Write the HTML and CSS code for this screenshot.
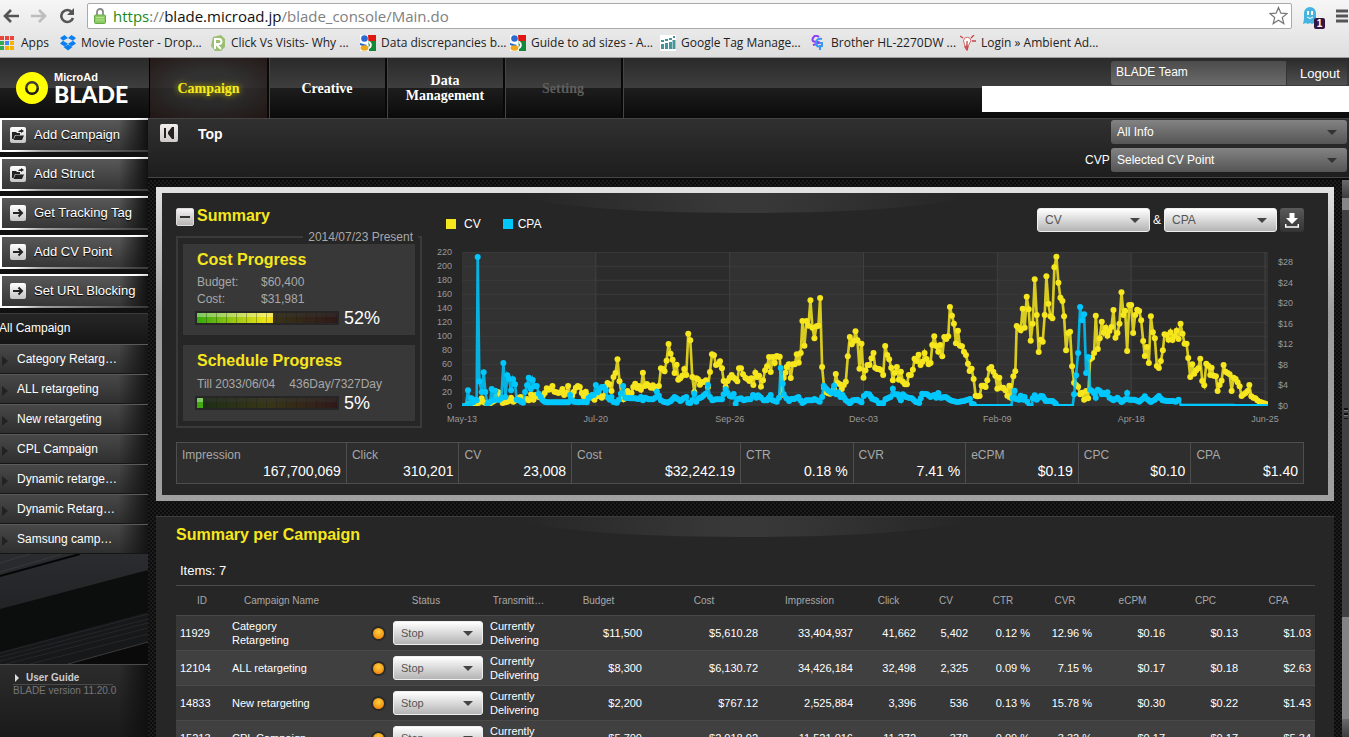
FILE: index.html
```html
<!DOCTYPE html>
<html lang="en">
<head>
<meta charset="utf-8">
<title>MicroAd BLADE</title>
<link rel="stylesheet" href="styles.css">
</head>
<body>
<div class="chrome">
  <div class="toolbar">
    <button class="tool" aria-label="Back"><svg width="16" height="14" viewBox="0 0 16 14"><path d="M8 1 2 7l6 6M2 7h14" fill="none" stroke="#555" stroke-width="2.6"/></svg></button>
    <button class="tool" aria-label="Forward"><svg width="16" height="14" viewBox="0 0 16 14"><path d="M8 1l6 6-6 6M14 7H0" fill="none" stroke="#bdbdbd" stroke-width="2.6"/></svg></button>
    <button class="tool" aria-label="Reload"><svg width="16" height="16" viewBox="0 0 16 16"><path d="M13 4.2A6 6 0 1 0 14 10" fill="none" stroke="#555" stroke-width="2.6"/><path d="M15 0v7H8z" fill="#555"/></svg></button>
    <div class="address">
      <svg width="12" height="16" viewBox="0 0 12 16"><path d="M3 8V4a3 3 0 0 1 6 0v4" fill="none" stroke="#8a8a8a" stroke-width="1.8"/><rect x=".5" y="7" width="11" height="8.500" rx="1" fill="#8ccb5e" stroke="#6aa84c"/><path d="M2 9.500h8M2 12h8" stroke="#b6e096"/></svg>
      <span class="url"><span class="secure">https</span>://<b>blade.microad.jp</b>/blade_console/Main.do</span>
      <svg class="star" width="19" height="19" viewBox="0 0 20 20"><path d="M10 1.500l2.500 6 6.500.5-5 4.200 1.600 6.300L10 15l-5.600 3.500L6 12.200 1 8l6.500-.5z" fill="#fff" stroke="#777" stroke-width="1.300"/></svg>
    </div>
    <div class="ghost">
      <svg width="22" height="24" viewBox="0 0 22 24"><path d="M1 20l1-5V9a6 6 0 0 1 12 0v6l1 5-3-1-2 1-2-1-2 1-2-1z" fill="#45b4e0"/><path d="M6 7v4M10 7v4" stroke="#fff" stroke-width="2"/><path d="M5 13q3 3 6 0" fill="none" stroke="#fff"/></svg>
      <span class="count">1</span>
    </div>
    <button class="tool menu" aria-label="Menu"><svg width="12" height="14" viewBox="0 0 12 14"><path d="M0 2h12M0 7h12M0 12h12" stroke="#555" stroke-width="3"/></svg></button>
  </div>
  <nav class="bookmarks">
    <a class="apps" href="#"><svg width="14" height="14" viewBox="0 0 14 14"><path d="M0 0h4v4H0zM5 0h4v4H5z" fill="#e8453c"/><path d="M10 0h4v4h-4z" fill="#e8453c"/><path d="M5 5h4v4H5z" fill="#4285f4"/><path d="M10 5h4v4h-4zM5 10h4v4H5zM10 10h4v4h-4z" fill="#f4b400"/><path d="M0 5h4v4H0zM0 10h4v4H0z" fill="#34a853"/></svg><span>Apps</span></a>
    <a href="#"><svg width="16" height="16" viewBox="0 0 16 16"><path d="M4.500 0 0 3l3 2.800L0 8.600l4.500 3L8 8.700l3.500 2.900 4.500-3-3-2.800L16 3l-4.500-3L8 3zM8 3l5 2.800L8 8.700 3 5.800z" fill="#0a7ff0" fill-rule="evenodd"/><path d="M3.500 12 8 9.500l4.500 2.500L8 15.500z" fill="#0a7ff0"/></svg><span>Movie Poster - Drop...</span></a>
    <a href="#"><svg width="16" height="16" viewBox="0 0 16 16"><path d="M3 2l8-2 4 4v8l-4 4H5l-4-5z" fill="#9bbf72"/><path d="M5 14V4h4a2.500 2.500 0 0 1 0 5H6l5 5" fill="none" stroke="#fff" stroke-width="2"/></svg><span>Click Vs Visits- Why ...</span></a>
    <a href="#"><svg width="16" height="16" viewBox="0 0 16 16"><path d="M7 0h9v6H7z" fill="#e3150f"/><path d="M7 6h9v10H7z" fill="#12893d"/><path d="M0 0h8l1 16H0z" fill="#fff"/><circle cx="4.500" cy="3.500" r="3.300" fill="#2b6bd1"/><path d="M0 8l7 2-2 2-5-2z" fill="#2b6bd1"/><ellipse cx="4.500" cy="13" rx="4" ry="2.800" fill="#f0a91c"/><path d="M8 6c5 0 5 8 0 8l2-4z" fill="#fff"/></svg><span>Data discrepancies b...</span></a>
    <a href="#"><svg width="16" height="16" viewBox="0 0 16 16"><path d="M7 0h9v6H7z" fill="#e3150f"/><path d="M7 6h9v10H7z" fill="#12893d"/><path d="M0 0h8l1 16H0z" fill="#fff"/><circle cx="4.500" cy="3.500" r="3.300" fill="#2b6bd1"/><path d="M0 8l7 2-2 2-5-2z" fill="#2b6bd1"/><ellipse cx="4.500" cy="13" rx="4" ry="2.800" fill="#f0a91c"/><path d="M8 6c5 0 5 8 0 8l2-4z" fill="#fff"/></svg><span>Guide to ad sizes - A...</span></a>
    <a href="#"><svg width="16" height="16" viewBox="0 0 16 16"><path d="M0 0h16v16H0z" fill="#fff"/><path d="M2.500 14V9M6.500 14V8M10.500 14V7M14 14V5" stroke="#45959a" stroke-width="3"/><path d="M1 6h3M5 5h3M9 4h3M13 2h2" stroke="#45959a" stroke-width="2"/></svg><span>Google Tag Manage...</span></a>
    <a href="#"><svg width="16" height="16" viewBox="0 0 16 16"><path d="M9 2Q5-1 3 3t4 4-4 3" fill="none" stroke="#8b3df5" stroke-width="2"/><path d="M12 4Q6 3 6 8t6 3V8H9m1 2v5" fill="none" stroke="#3c96f0" stroke-width="2"/></svg><span>Brother HL-2270DW ...</span></a>
    <a href="#"><svg width="16" height="16" viewBox="0 0 16 16"><path d="M5 11 3.500 6A3.500 3.500 0 1 1 11 6l-3 5z" fill="#fff" stroke="#d2686a"/><path d="M5 12h3l-1 3zM0 1l3 2M14 0l-3 3M12 6h4M7 6v5" fill="none" stroke="#c44448" stroke-width="1.300"/></svg><span>Login » Ambient Ad...</span></a>
  </nav>
</div>

<header class="app-head">
  <a class="logo" href="#">
    <svg width="32" height="32" viewBox="0 0 32 32"><circle cx="16" cy="16" r="11.500" fill="none" stroke="#ff0" stroke-width="9"/><circle cx="16" cy="16" r="4.500" fill="#ff0"/></svg>
    <span class="brand"><span class="brand-top">MicroAd</span><span class="brand-main">BLADE</span></span>
  </a>
  <nav class="tabs">
    <a class="tab current" href="#">Campaign</a>
    <a class="tab" href="#">Creative</a>
    <a class="tab" href="#">Data Management</a>
    <a class="tab off" href="#">Setting</a>
  </nav>
  <div class="account">
    <div class="account-bar"><span class="team">BLADE Team</span><button class="logout">Logout</button></div>
    <div class="blank"></div>
  </div>
</header>

<div class="body">
  <aside class="sidebar">
    <div class="actions">
      <button class="action"><span class="chip"><svg width="12" height="12" viewBox="0 0 12 12"><path d="M0 3h4l1 1h3v2H3L1.500 10H0zM3.500 6.500H12L10 11H1.500z"/><path d="M6 3q1-2 3-2V0l3 2-3 2V3z"/></svg></span>Add Campaign</button>
      <button class="action"><span class="chip"><svg width="12" height="12" viewBox="0 0 12 12"><path d="M0 3h4l1 1h3v2H3L1.500 10H0zM3.500 6.500H12L10 11H1.500z"/><path d="M6 3q1-2 3-2V0l3 2-3 2V3z"/></svg></span>Add Struct</button>
      <button class="action"><span class="chip"><svg width="12" height="12" viewBox="0 0 12 12"><path d="M1 6h9M6.500 2.500 10 6 6.500 9.500" fill="none" stroke="#222" stroke-width="2"/></svg></span>Get Tracking Tag</button>
      <button class="action"><span class="chip"><svg width="12" height="12" viewBox="0 0 12 12"><path d="M1 6h9M6.500 2.500 10 6 6.500 9.500" fill="none" stroke="#222" stroke-width="2"/></svg></span>Add CV Point</button>
      <button class="action"><span class="chip"><svg width="12" height="12" viewBox="0 0 12 12"><path d="M1 6h9M6.500 2.500 10 6 6.500 9.500" fill="none" stroke="#222" stroke-width="2"/></svg></span>Set URL Blocking</button>
    </div>
    <nav class="campaigns">
      <a class="all" href="#">All Campaign</a>
      <a href="#">Category Retarg…</a>
      <a href="#">ALL retargeting</a>
      <a href="#">New retargeting</a>
      <a href="#">CPL Campaign</a>
      <a href="#">Dynamic retarge…</a>
      <a href="#">Dynamic Retarg…</a>
      <a href="#">Samsung camp…</a>
    </nav>
    <svg class="blades" viewBox="0 0 148 110" preserveAspectRatio="none">
      <defs><linearGradient id="steel" x1="0" y1="0" x2="0" y2="1"><stop offset="0" stop-color="#2b2c2f"/><stop offset="1" stop-color="#222325"/></linearGradient></defs>
      <path d="M0 0h148v110H0z" fill="#0c0d0d"/>
      <path d="M0 0h148v16L0 55z" fill="url(#steel)"/>
      <path d="M0 22 80 0" stroke="#060606" stroke-width="2"/><path d="M0 18 62 0M0 9 30 0" stroke="#38393b"/>
      <path d="M0 98 148 58v34L70 110H0z" fill="#171819"/>
      <path d="M0 99 148 60M0 103 148 65M0 107 148 69M6 110 148 74M30 110 148 80" stroke="#26272a"/>
      <path d="M70 110 148 88v22z" fill="#0a0a0a"/><path d="M68 110 148 88" stroke="#3a3a3a"/>
    </svg>
    <footer class="guide">
      <a href="#">User Guide</a>
      <p>BLADE version 11.20.0</p>
    </footer>
  </aside>

  <main class="main">
    <div class="strip">
      <button class="collapse" aria-label="Collapse menu"><svg width="12" height="12" viewBox="0 0 12 12"><path d="M0 1h2v10H0zM10 0v12H8L4 7V5l4-5z" fill="#222"/></svg></button>
      <h1>Top</h1>
      <div class="filters">
        <label class="drop dark"><select aria-label="Info"><option>All Info</option></select></label>
        <label class="cvp" for="cvp">CVP</label>
        <span class="drop dark"><select id="cvp"><option>Selected CV Point</option></select></span>
      </div>
    </div>

    <div class="scroller">
      <div class="panels">
        <section class="summary">
          <div class="summary-body">
            <div class="left">
              <div class="summary-title"><button class="minus" aria-label="Collapse summary"></button><h2>Summary</h2></div>
              <fieldset class="progress">
                <legend>2014/07/23 Present</legend>
                <div class="card">
                  <h3>Cost Progress</h3>
                  <dl><dt>Budget:</dt><dd>$60,400</dd><dt>Cost:</dt><dd>$31,981</dd></dl>
                  <div class="meter-row"><div class="meter"><span class="dim" style="width:46%"></span></div><span class="pct">52%</span></div>
                </div>
                <div class="card">
                  <h3>Schedule Progress</h3>
                  <p class="till"><span>Till 2033/06/04</span><span>436Day/7327Day</span></p>
                  <div class="meter-row"><div class="meter"><span class="dim" style="width:96%"></span></div><span class="pct">5%</span></div>
                </div>
              </fieldset>
            </div>
            <div class="right">
              <div class="chart-head">
                <span class="key cv">CV</span><span class="key cpa">CPA</span>
                <div class="chart-tools">
                  <span class="drop"><select aria-label="First metric"><option>CV</option></select></span>
                  <span class="amp">&amp;</span>
                  <span class="drop"><select aria-label="Second metric"><option>CPA</option></select></span>
                  <button class="download" aria-label="Download"><svg width="14" height="15" viewBox="0 0 14 15"><path d="M4.500 0h5v5H13l-6 6-6-6h3.500z" fill="#fff"/><path d="M.7 11v3h12.600v-3" fill="none" stroke="#fff" stroke-width="1.500"/></svg></button>
                </div>
              </div>
              <div class="chart">
                <div class="axis-left"><span>220</span><span>200</span><span>180</span><span>160</span><span>140</span><span>120</span><span>100</span><span>80</span><span>60</span><span>40</span><span>20</span><span>0</span></div>
                <svg id="plot" class="plot" viewBox="0 0 2415 462" preserveAspectRatio="none"></svg>
                <div class="axis-right"><span>$28</span><span>$24</span><span>$20</span><span>$16</span><span>$12</span><span>$8</span><span>$4</span><span>$0</span></div>
                <div class="axis-x"><span>May-13</span><span>Jul-20</span><span>Sep-26</span><span>Dec-03</span><span>Feb-09</span><span>Apr-18</span><span>Jun-25</span></div>
              </div>
            </div>
          </div>
          <dl class="stats">
            <div><dt>Impression</dt><dd>167,700,069</dd></div>
            <div><dt>Click</dt><dd>310,201</dd></div>
            <div><dt>CV</dt><dd>23,008</dd></div>
            <div><dt>Cost</dt><dd>$32,242.19</dd></div>
            <div><dt>CTR</dt><dd>0.18 %</dd></div>
            <div><dt>CVR</dt><dd>7.41 %</dd></div>
            <div><dt>eCPM</dt><dd>$0.19</dd></div>
            <div><dt>CPC</dt><dd>$0.10</dd></div>
            <div><dt>CPA</dt><dd>$1.40</dd></div>
          </dl>
        </section>

        <section class="listing">
          <h2>Summary per Campaign</h2>
          <p class="items">Items: 7</p>
          <table>
            <colgroup><col class="w-id"><col class="w-name"><col class="w-lamp"><col class="w-status"><col class="w-trans"><col class="w-budget"><col class="w-cost"><col class="w-budget"><col class="w-click"><col class="w-cv"><col class="w-rate"><col class="w-rate"><col class="w-price"><col class="w-price"><col class="w-price"></colgroup>
            <thead><tr><th>ID</th><th>Campaign Name</th><th></th><th>Status</th><th>Transmitt…</th><th>Budget</th><th>Cost</th><th>Impression</th><th>Click</th><th>CV</th><th>CTR</th><th>CVR</th><th>eCPM</th><th>CPC</th><th>CPA</th></tr></thead>
            <tbody>
              <tr><td>11929</td><td>Category Retargeting</td><td><i class="lamp"></i></td><td><span class="drop"><select aria-label="Status of 11929"><option>Stop</option></select></span></td><td>Currently Delivering</td><td>$11,500</td><td>$5,610.28</td><td>33,404,937</td><td>41,662</td><td>5,402</td><td>0.12 %</td><td>12.96 %</td><td>$0.16</td><td>$0.13</td><td>$1.03</td></tr>
              <tr><td>12104</td><td>ALL retargeting</td><td><i class="lamp"></i></td><td><span class="drop"><select aria-label="Status of 12104"><option>Stop</option></select></span></td><td>Currently Delivering</td><td>$8,300</td><td>$6,130.72</td><td>34,426,184</td><td>32,498</td><td>2,325</td><td>0.09 %</td><td>7.15 %</td><td>$0.17</td><td>$0.18</td><td>$2.63</td></tr>
              <tr><td>14833</td><td>New retargeting</td><td><i class="lamp"></i></td><td><span class="drop"><select aria-label="Status of 14833"><option>Stop</option></select></span></td><td>Currently Delivering</td><td>$2,200</td><td>$767.12</td><td>2,525,884</td><td>3,396</td><td>536</td><td>0.13 %</td><td>15.78 %</td><td>$0.30</td><td>$0.22</td><td>$1.43</td></tr>
              <tr><td>15213</td><td>CPL Campaign</td><td><i class="lamp"></i></td><td><span class="drop"><select aria-label="Status of 15213"><option>Stop</option></select></span></td><td>Currently Delivering</td><td>$5,700</td><td>$2,018.92</td><td>11,521,016</td><td>11,372</td><td>378</td><td>0.09 %</td><td>3.32 %</td><td>$0.17</td><td>$0.17</td><td>$5.34</td></tr>
            </tbody>
          </table>
        </section>
      </div>
      <div class="bar" aria-hidden="true"><span class="bar-end"></span><span class="bar-gap"></span><span class="bar-thumb"></span><span class="bar-rest"></span><span class="bar-end"></span></div>
    </div>
  </main>
</div>
<script src="chart.js"></script>
</body>
</html>
```

FILE: styles.css
```css
* { box-sizing: border-box; }
body {
  margin: 0; height: 100vh; overflow: hidden; display: flex; flex-direction: column;
  background: #1a1a1a; color: #fff; font: 12px/14px "Liberation Sans", Arial, sans-serif;
}
h1, h2, h3, p, dl, dd { margin: 0; }
a { color: inherit; text-decoration: none; }
button, select { font: inherit; color: inherit; margin: 0; }
button { border: 0; padding: 0; background: none; }

/* browser chrome */
.chrome { flex: none; background: linear-gradient(#f6f6f6, #dedede); border-bottom: 1px solid #9c9c9c; color: #222; font-family: "Open Sans", sans-serif; }
.toolbar { display: flex; align-items: center; height: 31px; padding-left: 3px; }
.tool { width: 28px; height: 24px; display: flex; align-items: center; }
.tool svg, .address svg { display: block; flex: none; }
.address { flex: 1; display: flex; align-items: center; height: 26px; padding: 0 3px 0 6px; background: #fff; border: 1px solid #aaa; border-radius: 2px; }
.url { flex: 1; padding-left: 7px; font-size: 15px; line-height: 22px; color: #808080; }
.url b { font-weight: 400; color: #111; }
.secure { color: #1a8a1a; }
.ghost { position: relative; width: 44px; padding-left: 10px; }
.ghost svg { display: block; }
.count { position: absolute; left: 22px; top: 14px; width: 11px; height: 11px; border-radius: 2px; background: #33163f; color: #fff; font: bold 10px/11px "Liberation Sans", sans-serif; text-align: center; }
.menu { width: 13px; }
.bookmarks { display: flex; height: 26px; align-items: center; padding: 0 0 2px 0; font-size: 12px; line-height: 20px; white-space: nowrap; }
.bookmarks a { display: flex; align-items: center; gap: 5px; width: 150px; }
.bookmarks .apps { width: 60px; gap: 7px; }

/* application header */
.app-head { flex: none; display: flex; height: 60px; background: linear-gradient(#2a2a2a, #3e3e3e 50%, #1d1d1d 50%, #0b0b0b); }
.logo { width: 149px; display: flex; align-items: center; gap: 6px; padding-left: 16px; }
.brand { display: flex; flex-direction: column; font-weight: 700; }
.brand-top { font-size: 11px; line-height: 12px; }
.brand-main { font: 900 23px/23px Lato, sans-serif; }
.tabs { display: flex; border-left: 1px solid #000; }
.tab { width: 119px; padding: 0 16px; display: flex; align-items: center; justify-content: center; text-align: center; font: bold 14px/15px "Liberation Serif", serif; border-right: 2px solid #080808; box-shadow: 1px 0 #454545; }
.tab:nth-child(n+2) { width: 118px; }
.tab.current { color: #f6ec1b; text-shadow: 0 0 6px #c8b800; background: radial-gradient(ellipse at center, rgba(48,48,48,.8) 40%, rgba(36,24,22,.9)); }
.tab.off { color: #5e5e5e; }
.account { margin-left: auto; width: 367px; padding-top: 3px; }
.account-bar { display: flex; width: 236px; height: 24px; margin-left: 129px; border-radius: 3px; overflow: hidden; background: linear-gradient(#4c4c4c, #6a6a6a); line-height: 23px; }
.team { flex: 1; padding-left: 5px; }
.logout { width: 61px; padding-left: 6px; font-size: 13px; background: linear-gradient(#2e2e2e, #505050); border-left: 1px solid #333; }
.blank { height: 26px; margin-top: 1px; background: #fff; }

.body { flex: 1; min-height: 0; display: flex; }

/* sidebar */
.sidebar { flex: none; width: 148px; display: flex; flex-direction: column; background: #111; }
.actions { display: flex; flex-direction: column; gap: 5px; padding-bottom: 5px; }
.action { display: flex; align-items: center; gap: 8px; height: 34px; padding: 0 0 1px 8px; font-size: 13px; white-space: nowrap; text-shadow: 0 1px 1px #000;
  border: solid; border-width: 2px 0 2px 2px;
  background: linear-gradient(90deg, transparent 80%, #111), linear-gradient(#585858, #363636);
  border-image: linear-gradient(165deg, #fff 50%, #a0a0a0 60%, #333) 2; }
.chip { width: 16px; height: 16px; display: flex; align-items: center; justify-content: center; border-radius: 2px; background: linear-gradient(#fff, #c4c4c4); }
.chip svg { fill: #222; }
.campaigns a { position: relative; display: block; height: 30px; padding-left: 17px; line-height: 28px; border-top: 1px solid #5a5a5a; border-bottom: 1px solid #161616; background: linear-gradient(90deg, transparent 80%, #141414), linear-gradient(#484848, #2f2f2f); white-space: nowrap; }
.campaigns a::before { content: ""; position: absolute; left: 2px; top: 11px; border: 5px solid transparent; border-left: 6px solid #222; border-right: 0; }
.campaigns .all { height: 31px; padding-left: 0; text-indent: -1px; border-top-color: #3c3c3c; background: linear-gradient(#262626, #161616); }
.campaigns .all::before { content: none; }
.blades { display: block; width: 148px; height: 110px; flex: none; }
.guide { flex: 1; padding: 6px 35px 0 13px; border-top: 1px solid #4a4a4a; background: linear-gradient(90deg, transparent 80%, #101010), linear-gradient(#2c2c2c, #1a1a1a); font-size: 10px; line-height: 12px; color: #777; white-space: nowrap; }
.guide a { display: flex; align-items: center; gap: 7px; height: 14px; font-weight: 700; color: #ccc; border-bottom: 1px solid #4a4a4a; }
.guide a::before { content: ""; border: 4px solid transparent; border-left: 4px solid #ddd; border-right: 0; margin-left: 2px; }

/* drop-downs */
.drop { position: relative; display: block; }
.drop select { display: block; width: 100%; height: 24px; appearance: none; padding: 0 7px; border: 1px solid #efefef; border-radius: 3px; background: linear-gradient(#fff, #b4b4b4); color: #555; }
.drop::after { content: ""; position: absolute; right: 10px; top: 10px; border: 5px solid transparent; border-top: 5px solid #444; border-bottom: 0; pointer-events: none; }
.drop.dark select { padding: 0 6px; border: 0; color: #fff; background: linear-gradient(#838383, #555); }
.drop.dark::after { border-top-color: #333; }

/* main column */
.main { flex: 1; min-width: 0; display: flex; flex-direction: column; }
.strip { flex: none; display: flex; align-items: flex-start; height: 62px; padding: 1px 2px 0 12px; border-top: 1px solid #444; border-bottom: 2px solid #0b0b0b; box-shadow: inset 0 -1px #464646; background: linear-gradient(#303030, #1d1d1d); }
.collapse { width: 18px; height: 18px; margin: 4px 20px 0 0; padding-left: 2px; display: flex; align-items: center; justify-content: center; border-radius: 2px; background: linear-gradient(#f2eeee, #cfcaca); }
.strip h1 { margin-top: 6px; font-size: 14px; line-height: 16px; }
.filters { margin-left: auto; display: grid; grid-template-columns: 26px 236px; gap: 4px 0; }
.filters > :first-child { grid-column: 2; }
.cvp { line-height: 24px; }
.scroller { flex: 1; min-height: 0; display: flex; }
.panels { flex: 1; min-width: 0; overflow: hidden; padding: 7px 8px 0 8px; background: linear-gradient(#0e0e0e, #0e0e0e) 0 0 / 0 0, radial-gradient(circle at 1px 1px, #0c0c0c 0 1px, transparent 1px) 0 0 / 4px 4px, radial-gradient(circle at 1px 1px, #0c0c0c 0 1px, transparent 1px) 2px 2px / 4px 4px, #1c1c1c; }
.bar { flex: none; width: 7px; display: flex; flex-direction: column; }
.bar-end { height: 18px; background: linear-gradient(#6a6a6a, #3c3c3c); }
.bar-gap { height: 12px; background: #868686; }
.bar-thumb { flex: 4; background: repeating-linear-gradient(#111 0 2px, #777 2px 3px, #444 3px 5px) center / 4px 11px no-repeat, #414141; }
.bar-rest { flex: 1; background: #838383; }

h2, h3 { color: #f6e61e; font-size: 16px; line-height: 20px; }

/* summary */
.summary { position: relative; padding: 15px 24px 11px 14px; border: 6px solid; border-image: linear-gradient(#e2e2e2, #9c9c9c 40%, #a0a0a0) 6; background: #262626; }
.summary::before, .listing::before { content: ""; position: absolute; left: 31%; right: 31%; top: 0; height: 20px; border-radius: 0 0 50% 50% / 0 0 100% 100%; background: linear-gradient(90deg, #262626, #383838 45%, #383838 55%, #262626); }
.summary-body { position: relative; display: flex; gap: 14px; }
.left { flex: none; width: 246px; }
.summary-title { display: flex; gap: 3px; height: 18px; margin-bottom: 4px; }
.summary-title h2 { line-height: 16px; }
.minus { width: 18px; height: 18px; border-radius: 2px; border: 1px solid #ddd; background: linear-gradient(#333, #333) center / 10px 2px no-repeat, linear-gradient(#f6f4f4, #b8b4b4); }
.progress { margin: 0; padding: 0 5px 5px; border: 2px solid #3a3a3a; display: block; min-width: 0; color: #a8a8a8; }
.progress legend { margin: 0 -3px 0 auto; padding: 0 5px; height: 14px; }
.card { min-height: 76px; padding: 6px 0 12px 14px; background: #383838; }
.card + .card { margin-top: 10px; }
.card dl { display: grid; grid-template-columns: 64px 1fr; row-gap: 3px; margin: 5px 0 0; }
.card .till { display: flex; gap: 14px; margin-top: 6px; }
.card h3 { line-height: 20px; }
.meter-row { display: flex; align-items: center; gap: 5px; height: 20px; margin: 2px 0 -5px -2px; }
.meter { display: flex; justify-content: flex-end; width: 144px; height: 14px; padding: 2px; border: 0; background: repeating-linear-gradient(90deg, transparent 0 9px, rgba(0,0,0,.25) 9px 10px) 2px 2px / 140px 10px no-repeat, linear-gradient(rgba(255,255,255,.35) 0 40%, transparent 40%) 2px 2px / 140px 10px no-repeat, linear-gradient(90deg, #37a80d, #f2e616 50%, #c02020) 2px 2px / 140px 10px no-repeat, #262626; }
.dim { background: rgba(24,24,24,.86); }
.pct { font-size: 18px; line-height: 20px; color: #fff; }
.right { flex: 1; min-width: 0; }
.chart-head { display: flex; align-items: center; height: 24px; margin-bottom: 20px; padding-left: 10px; }
.key { display: flex; align-items: center; height: 16px; margin: 8px 22px 0 0; gap: 8px; }
.key::before { content: ""; width: 10px; height: 10px; background: #f6e61e; }
.key.cpa { gap: 5px; }
.key.cpa::before { background: #00c8ff; }
.chart-tools { margin-left: auto; display: flex; align-items: center; gap: 3px; }
.chart-tools .drop { width: 113px; }
.amp { width: 8px; }
.download { width: 24px; height: 24px; display: flex; align-items: center; justify-content: center; border-radius: 3px; background: linear-gradient(#5a5a5a, #333); }
.chart { display: grid; grid-template-columns: 16px 1fr 26px; column-gap: 10px; font-size: 9px; line-height: 14px; color: #999; }
.plot { display: block; width: 100%; height: 154px; overflow: hidden; }
.axis-left, .axis-right { display: flex; flex-direction: column; justify-content: space-between; margin: -7px 0; }
.axis-left { text-align: right; }
.axis-right { padding-top: 10px; height: 168px; }
.axis-x { grid-column: 2; display: flex; justify-content: space-between; margin-top: 6px; padding-right: 3px; }
.axis-x span { width: 0; display: flex; justify-content: center; white-space: nowrap; }

.stats { display: grid; grid-template-columns: 3fr 2fr 2fr 3fr 2fr 2fr 2fr 2fr 2fr; margin-top: 14px; border: 1px solid #4e4e4e; background: #2e2e2e; }
.stats div { padding: 5px 5px 3px; }
.stats div + div { border-left: 1px solid #4e4e4e; }
.stats dt { color: #a8a8a8; }
.stats dd { font-size: 14px; line-height: 18px; text-align: right; }

/* campaign table */
.listing { position: relative; margin-top: 15px; padding: 8px 20px 0; border-top: 1px solid #3c3c3c; background: #262626; }
.listing h2 { position: relative; }
.items { margin: 18px 0 6px 4px; font-size: 13px; line-height: 16px; }
table { width: 100%; table-layout: fixed; border-collapse: collapse; font-size: 11px; }
.w-id { width: 52px; } .w-name { width: 107px; } .w-lamp { width: 31px; } .w-status { width: 120px; } .w-trans { width: 65px; }
.w-budget { width: 95px; } .w-cost { width: 116px; } .w-click { width: 63px; } .w-cv { width: 52px; } .w-rate { width: 62px; } .w-price { width: 73px; }
th { height: 30px; padding: 0; border: solid #4a4a4a; border-width: 1px 0; font-size: 10px; font-weight: 400; color: #a8a8a8; text-align: center; }
td { height: 35px; padding: 3px 4px; border-bottom: 1px solid #4a4a4a; text-align: right; }
td:nth-child(-n+5) { text-align: left; }
td:nth-child(3), td:nth-child(4) { padding: 0; }
td .drop { width: 90px; margin-left: 27px; }
tbody tr { background: #373737; }
tbody tr:nth-child(even) { background: #404040; }
.lamp { display: block; width: 15px; height: 15px; margin-left: 36px; border: 2px solid #2a2a2a; border-radius: 50%; background: radial-gradient(circle at 50% 35%, #ffd23a, #f08a12 75%); }
```

FILE: chart.js
```js
// Each block holds "x,y" samples with its own x offset and baseline, in thirds of a pixel.
const cv = [
  { dx: -96, base: 617, pts: "100,614 115,612 130,612 145,608 155,594 160,605 175,612 185,606 195,600 205,576 218,608 226,606 235,603 243,592 250,604 258,600 266,592 272,590 280,600 290,596 296,600 303,582 310,598 316,584 325,590 332,592 338,586 344,578 350,564 356,568 362,566 367,557 373,574 379,576 385,578 391,576 397,566 402,584 408,578 414,557 420,584 426,586 431,574 437,562 443,557 449,560 455,578 461,588 467,574 473,586 480,590 487,592 493,598 500,588 505,580 510,588 515,592 520,588 526,560 532,548 538,552 544,572 550,530 556,518 562,477 568,543 574,580 580,597 586,580 592,572 598,582 604,578 609,560 615,550 621,563 626,557 632,568 638,517 644,557 650,551 656,556 662,562 668,555 674,565 680,560 686,557 692,504 698,506 703,513 709,481 715,431 721,460 727,478 733,518 739,493 744,538 750,534 756,526 762,506 768,524 774,400 780,420 786,530 792,575 798,534 803,537 809,553 815,545 821,545 827,540 833,560 839,515 845,462 851,465 857,494 863,492 869,483" },
  { dx: 774, base: 525, pts: "5,412 10,450 16,468 22,450 28,440 34,432 40,440 46,445 51,451 56,412 62,412 68,430 75,440 81,444 87,450 93,442 99,462 105,425 110,438 116,434 122,467 128,448 134,418 140,406 146,378 151,423 157,378 163,396 169,375 175,377 178,377 184,492 190,440 195,425 199,408 205,400 211,441 217,400 223,400 229,370 235,395 241,366 246,270 252,344 258,270 264,284 270,208 276,290 282,322 288,286 294,284 299,201 305,408 311,470 317,484 323,487 329,488 335,484 341,474 346,429 352,456 358,460 364,474 370,462 376,452 382,376 388,318 394,340 400,330 405,301 411,328 417,413 423,338 429,440 435,418 441,402 447,402 453,382 459,366 464,410 470,414 476,414 482,418 488,432 494,345 500,372 506,385 512,410 517,448 523,425 529,408 535,446 541,422 547,452 553,460 559,460 565,432 571,432 577,416 582,383 588,390 594,371 600,402 606,392 612,366 618,384 624,400 630,396 635,342 641,316 647,345 653,362 659,342 665,376 671,318 677,324 683,316 688,228 694,254 700,278 706,337 712,299 718,344 724,346 730,362 736,372 742,398 747,420 753,413 759,444 765,494 771,496 777,495 783,464 789,464 795,468 800,448 806,413 812,408 818,422 824,434 830,473 836,440 842,470 848,470 854,478 860,494 866,464 870,500 878,436 884,421" },
  { dx: 1614, base: 525, pts: "48,285 54,290 60,298 66,233 72,290 78,197 84,235 90,329 96,278 102,145 108,252 114,363 120,326 126,332 132,252 137,136 143,218 149,256 155,262 161,109 167,77 173,155 179,200 185,210 190,256 196,358 202,306 208,302 214,406 220,455 226,462 232,467 238,490 244,485 250,506 256,480 262,502 268,385 274,380 280,366 285,254 291,354 297,322 303,272 309,305 315,290 320,314 326,300 332,288 338,237 344,320 350,306 356,278 362,184 368,252 373,239 379,360 385,222 391,222 397,306 403,252 409,236 415,240 421,268 427,330 432,375 438,348 444,396 450,256 456,304 462,322 468,405 474,411 480,390 486,358 491,310 497,312 503,326 509,304 515,327 521,315 527,299 533,324 539,278 545,308 551,338 557,338 562,381 568,438 574,400 580,428 586,418 592,412 598,383 604,450 610,463 616,398 622,404 628,432 632,410 638,434 645,436 650,480 656,462 662,449 668,402 674,422 680,426 686,430 692,480 698,440 704,444 710,454 716,466 722,495 728,490 734,486 740,480 745,462 751,496 757,500 763,502 769,508 775,512 781,514 787,516 794,518" }
];
const cpa = [
  { dx: -96, base: 617, pts: "98,613 108,613 114,570 120,612 124,594 130,606 135,598 140,600 143,170 148,543 155,575 161,516 166,575 172,612 180,605 185,566 190,600 196,571 202,598 208,598 214,594 220,488 226,590 232,525 237,535 243,570 249,537 255,552 260,598 268,600 273,604 279,607 285,575 291,555 296,532 302,566 308,539 314,558 320,557 326,580 332,590 338,600 344,604 350,606 415,606 420,584 426,600 432,604 445,606 455,604 470,606 475,594 485,584 491,584 497,554 503,576 509,566 515,560 521,560 527,570 533,592 539,598 544,590 550,605 560,607 566,598 572,580 579,557 585,592 600,594 615,594 625,596 632,590 638,600 645,592 655,597 668,597 675,592 680,574 686,586 692,600 700,604 712,607 722,602 733,590 742,596 750,602 760,594 768,590 774,607 780,608 786,600 792,580 798,604 806,594 815,590 826,580 833,554 839,590 846,600 857,597 869,597" },
  { dx: 774, base: 525, pts: "5,505 10,490 16,475 22,486 28,495 34,497 40,489 46,518 52,504 62,502 70,508 80,505 90,505 98,492 108,500 113,493 122,500 130,508 140,508 151,492 157,508 169,512 176,500 181,411 187,458 190,490 198,502 206,510 213,504 222,504 234,498 240,508 246,516 258,508 275,508 282,504 298,512 305,498 310,464 316,472 322,478 334,486 341,464 347,490 353,484 360,498 366,492 376,508 388,517 397,508 411,506 423,514 430,495 438,488 446,490 455,503 467,508 475,517 488,517 495,505 510,498 517,473 524,490 532,490 541,508 547,490 556,498 574,502 585,512 596,516 605,488 620,490 630,498 641,492 647,500 653,486 660,500 675,498 690,508 710,513 730,510 748,504 754,518 770,523 872,523" },
  { dx: 1614, base: 525, pts: "36,500 42,479 46,504 55,506 60,494 68,506 72,498 80,512 82,521 94,521 96,502 102,493 108,506 120,495 126,496 135,510 155,510 165,518 175,523 216,523 220,490 226,433 232,366 238,228 244,268 250,250 256,426 262,378 268,476 274,480 280,487 285,500 291,476 297,480 303,490 309,486 315,490 320,484 326,500 338,508 350,500 362,513 373,505 379,486 385,506 400,506 415,512 430,500 432,496 440,505 450,513 462,506 474,495 485,508 500,510 515,510 525,512 533,506 540,522 800,523" }
];

const H = 462;
const BAND = 401;

function samples(blocks) {
  const raw = blocks.flatMap(b => b.pts.split(" ").map(p => {
    const [x, y] = p.split(",").map(Number);
    return [x + b.dx, H - (b.base - y)];
  }));
  const out = [];
  raw.forEach((p, i) => {
    if (i) {
      const q = raw[i - 1];
      const n = Math.round((p[0] - q[0]) / 6);
      for (let k = 1; k < n; k++) {
        out.push([q[0] + (p[0] - q[0]) * k / n, q[1] + (p[1] - q[1]) * k / n]);
      }
    }
    out.push(p);
  });
  return out;
}

function line(blocks, color) {
  const pts = samples(blocks);
  const dots = pts.map(([x, y]) => {
    const r = y > H - 5 ? 4 : 9;
    return `<circle cx="${x}" cy="${y}" r="${r}"/>`;
  }).join("");
  return `<polyline points="${pts.join(" ")}" fill="none" stroke="${color}" stroke-width="8" opacity=".85"/><g fill="${color}">${dots}</g>`;
}

let art = "";
for (let i = 0; i < 7; i++) {
  art += `<rect x="${i * BAND}" width="${BAND}" height="${H}" fill="${i % 2 ? "#2c2c2c" : "#323232"}"/>`;
}
for (let i = 0; i <= 11; i++) art += `<path d="M0 ${i * 42 + 1}H2415" stroke="#3b3b3b" stroke-width="3"/>`;
for (let i = 1; i < 7; i++) art += `<path d="M${i * BAND} 0V${H}" stroke="#414141" stroke-width="3"/>`;
document.getElementById("plot").innerHTML = art + line(cv, "#f6e61e") + line(cpa, "#00c8ff");
```
